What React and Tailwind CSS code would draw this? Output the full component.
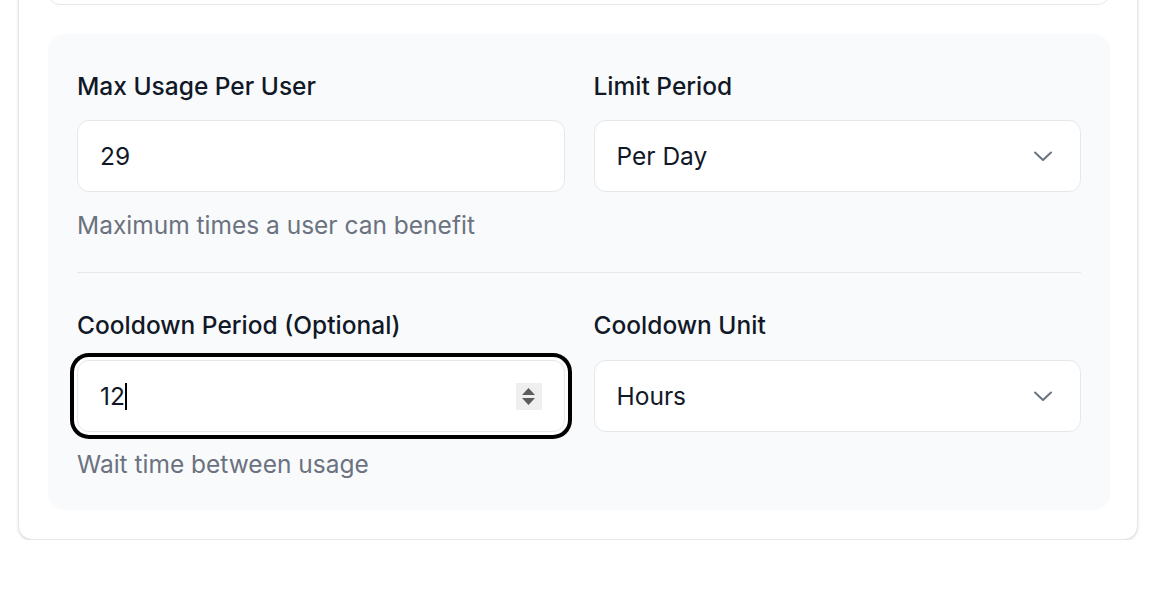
import React from 'react';

function Chevron() {
  return (
    <svg width="20" height="12" viewBox="0 0 20 12" fill="none" className="pointer-events-none absolute right-[28px] top-1/2 -translate-y-1/2">
      <path d="M2 2.5 10 10 18 2.5" stroke="#6b7280" strokeWidth="2" strokeLinecap="round" strokeLinejoin="round" />
    </svg>
  );
}

function Spinner() {
  return (
    <div className="flex h-[27px] w-[26px] flex-col items-center justify-center gap-[3px] bg-[#efefef]">
      <svg width="13" height="7" viewBox="0 0 13 7"><path d="M6.5 0 13 7H0z" fill="#5c5c5c" /></svg>
      <svg width="13" height="7" viewBox="0 0 13 7"><path d="M0 0h13L6.5 7z" fill="#5c5c5c" /></svg>
    </div>
  );
}

function SelectField({ label, value, options, gap = 'mb-4' }) {
  return (
    <div>
      <label className={`${gap} block h-9 text-[24.5px] leading-9 font-medium text-[#111827]`}>{label}</label>
      <div className="relative">
        <select
          defaultValue={value}
          className="h-[72px] w-full appearance-none rounded-xl border border-[#e5e7eb] bg-white px-[22px] text-[24.5px] text-[#111827] outline-none"
        >
          {options.map(o => (
            <option key={o} value={o}>{o}</option>
          ))}
        </select>
        <Chevron />
      </div>
    </div>
  );
}

export default function App() {
  return (
    <div className="min-h-screen bg-white font-['Inter','Liberation_Sans',sans-serif]">
      <div className="-mt-[120px] ml-[18px] w-[1120px] rounded-[14px] border border-[#e5e7eb] bg-white pt-[29px] pr-[27px] pb-[29px] pl-[29px] shadow-sm">
        {/* previous section, cut off at top */}
        <div className="h-[95px] rounded-xl border border-[#e5e7eb] bg-white" />

        <div className="mt-[29px] rounded-2xl bg-[#f9fafb] px-[29px] pt-[34px] pb-[28px]">
          <div className="grid grid-cols-2 gap-x-[29px]">
            <div>
              <label className="mb-4 block h-9 text-[24.5px] leading-9 font-medium text-[#111827]">Max Usage Per User</label>
              <input
                type="text"
                readOnly
                value="29"
                className="h-[72px] w-full rounded-xl border border-[#e5e7eb] bg-white px-[22px] text-[24.5px] text-[#111827] outline-none"
              />
              <p className="mt-[15px] h-9 text-[24.5px] leading-9 text-[#6b7280]">Maximum times a user can benefit</p>
            </div>
            <SelectField label="Limit Period" value="Per Day" options={['Per Day', 'Per Week', 'Per Month']} />
          </div>

          <div className="mt-[29px] mb-[34px] h-px bg-[#e5e7eb]" />

          <div className="grid grid-cols-2 gap-x-[29px]">
            <div>
              <label className="mb-[17px] block h-9 text-[24.5px] leading-9 font-medium text-[#111827]">Cooldown Period (Optional)</label>
              <div className="flex h-[72px] w-full items-center rounded-xl border border-[#e5e7eb] bg-white px-[22px] ring-[4px] ring-black ring-offset-[3px]">
                <span className="text-[24.5px] text-[#111827]">12</span>
                <span className="h-[27px] w-[2px] bg-black" />
                <div className="flex-1" />
                <Spinner />
              </div>
              <p className="mt-[14px] h-9 text-[24.5px] leading-9 text-[#6b7280]">Wait time between usage</p>
            </div>
            <SelectField label="Cooldown Unit" value="Hours" options={['Minutes', 'Hours', 'Days']} gap="mb-[17px]" />
          </div>
        </div>
      </div>
    </div>
  );
}
